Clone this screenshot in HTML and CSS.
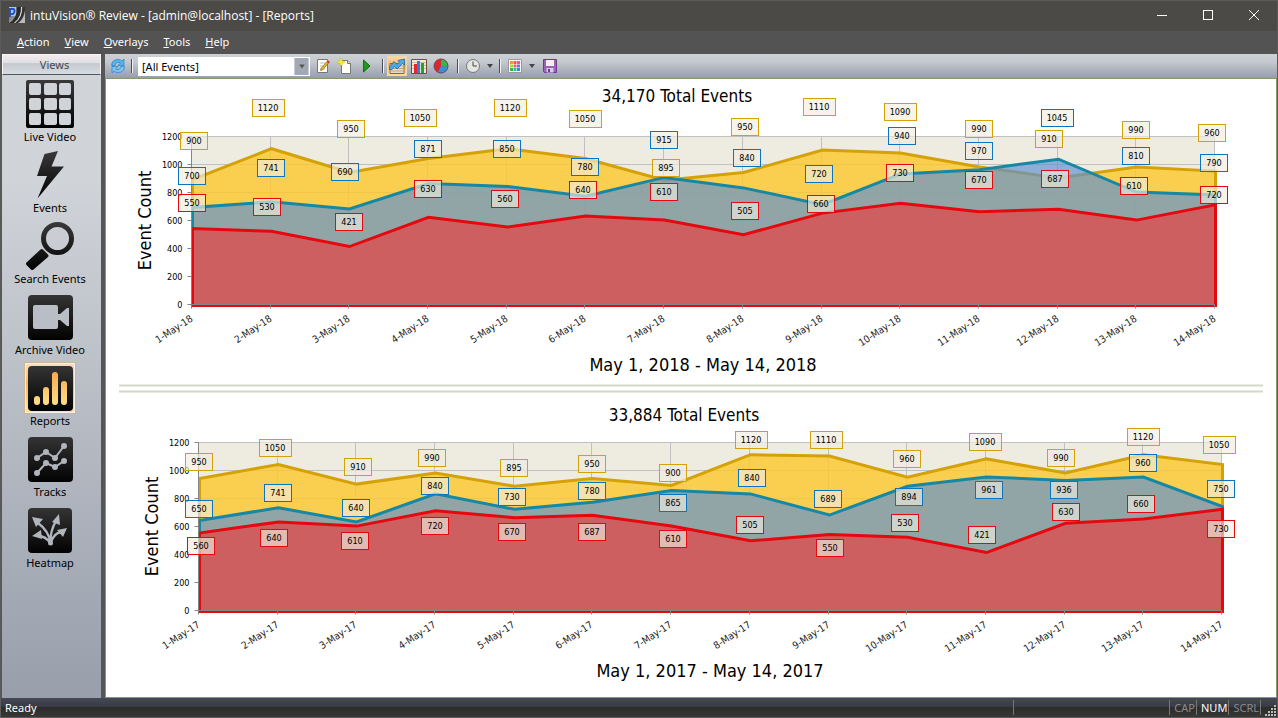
FILE: index.html
```html
<!DOCTYPE html>
<html lang="en">
<head>
<meta charset="utf-8">
<title>intuVision Review - Reports</title>
<link rel="stylesheet" href="styles.css">
</head>
<body>
<div class="app">
  <header class="titlebar">
    <svg class="logo" viewBox="0 0 16 16" aria-hidden="true">
      <defs><linearGradient id="logoBg" x1="0" y1="0" x2="1" y2="1"><stop offset="0" stop-color="#555"/><stop offset="1" stop-color="#d0d0d0"/></linearGradient></defs>
      <rect width="16" height="16" fill="url(#logoBg)"/>
      <rect width="7" height="9" fill="#b9c3d2"/>
      <path d="M1 1v9M1.500 2h2.500q1.500 0 1.500 2t-1.500 3H2" fill="none" stroke="#1e56c8" stroke-width="2"/>
      <path d="M12 0q1 10-7 16H0q8-4 8-16z" fill="#2b2b2b"/>
      <path d="M16 3q-1 9-7 13H6Q13 11 13.500 0H16z" fill="#333"/>
      <path d="M12.500 0Q13 10 5.500 16" fill="none" stroke="#ddd"/>
      <path d="M16 5q-1 8-6 11h6z" fill="#bbb"/>
    </svg>
    <h1 class="title">intuVision® Review - [admin@localhost] - [Reports]</h1>
    <div class="window-buttons">
      <button type="button" aria-label="Minimize"><svg viewBox="0 0 12 12"><path d="M1 6.500h10"/></svg></button>
      <button type="button" aria-label="Maximize"><svg viewBox="0 0 12 12"><rect x="1.500" y="1.500" width="9" height="9"/></svg></button>
      <button type="button" aria-label="Close"><svg viewBox="0 0 12 12"><path d="M1 1l10 10M11 1L1 11"/></svg></button>
    </div>
  </header>

  <nav class="menubar" aria-label="Main menu">
    <button type="button"><u>A</u>ction</button>
    <button type="button"><u>V</u>iew</button>
    <button type="button"><u>O</u>verlays</button>
    <button type="button"><u>T</u>ools</button>
    <button type="button"><u>H</u>elp</button>
  </nav>

  <div class="workspace">
    <aside class="sidebar">
      <h2 class="sidebar-title">Views</h2>
      <svg class="defs" aria-hidden="true">
        <defs>
          <linearGradient id="tile" x1="0" y1="0" x2="0" y2="1"><stop offset="0" stop-color="#343434"/><stop offset="1" stop-color="#020202"/></linearGradient>
          <linearGradient id="ink" gradientUnits="userSpaceOnUse" x1="0" y1="0" x2="0" y2="48"><stop offset="0" stop-color="#3a3a3a"/><stop offset="1" stop-color="#000"/></linearGradient>
          <linearGradient id="bars" gradientUnits="userSpaceOnUse" x1="0" y1="8" x2="0" y2="41"><stop offset="0" stop-color="#fba94a"/><stop offset="1" stop-color="#fde08a"/></linearGradient>
        </defs>
      </svg>
      <button type="button" class="view">
        <svg class="view-icon" viewBox="0 0 48 48"><path fill="url(#ink)" fill-rule="evenodd" d="M2 0h44q2 0 2 2v44q0 2-2 2H2q-2 0-2-2V2q0-2 2-2z
          M5 3q-2 0-2 2v8q0 2 2 2h8q2 0 2-2V5q0-2-2-2z M20 3q-2 0-2 2v8q0 2 2 2h9q2 0 2-2V5q0-2-2-2z M35 3q-2 0-2 2v8q0 2 2 2h8q2 0 2-2V5q0-2-2-2z
          M5 18q-2 0-2 2v8q0 2 2 2h8q2 0 2-2v-8q0-2-2-2z M20 18q-2 0-2 2v8q0 2 2 2h9q2 0 2-2v-8q0-2-2-2z M35 18q-2 0-2 2v8q0 2 2 2h8q2 0 2-2v-8q0-2-2-2z
          M5 33q-2 0-2 2v8q0 2 2 2h8q2 0 2-2v-8q0-2-2-2z M20 33q-2 0-2 2v8q0 2 2 2h9q2 0 2-2v-8q0-2-2-2z M35 33q-2 0-2 2v8q0 2 2 2h8q2 0 2-2v-8q0-2-2-2z"/></svg>
        <span>Live Video</span>
      </button>
      <button type="button" class="view">
        <svg class="view-icon" viewBox="0 0 48 48"><path fill="url(#ink)" d="M18.500 3L32 0 25.500 15.500H38L11.500 47.500 21 25H11z"/></svg>
        <span>Events</span>
      </button>
      <button type="button" class="view">
        <svg class="view-icon" viewBox="0 0 48 48"><circle cx="31.500" cy="16.500" r="14" fill="none" stroke="url(#ink)" stroke-width="5"/><path fill="url(#ink)" d="M14.500 27.500q1.500-1 2.500 0l5 5q1 1 0 2.500L7.500 47.500q-1.500 1-2.500 0l-4.500-4.500q-1-1.500 0-2.500z"/></svg>
        <span>Search Events</span>
      </button>
      <button type="button" class="view">
        <svg class="view-icon" viewBox="0 0 48 48"><rect x="2" y="2" width="45" height="45" rx="4" fill="url(#tile)"/><rect x="7" y="12" width="25" height="24" rx="2" fill="#b9bdc5"/><path fill="#b9bdc5" d="M32 21h2l7-6h2v18h-2l-7-6h-2z"/></svg>
        <span>Archive Video</span>
      </button>
      <button type="button" class="view is-active">
        <svg class="view-icon" viewBox="0 0 48 48"><rect x="2" y="2" width="45" height="45" rx="4" fill="url(#tile)"/><path fill="none" stroke="url(#bars)" stroke-width="6" stroke-linecap="round" d="M11 35v3.010M20 26v12M29 11v27M38 20v18"/></svg>
        <span>Reports</span>
      </button>
      <button type="button" class="view">
        <svg class="view-icon" viewBox="0 0 48 48"><rect x="2" y="2" width="45" height="45" rx="4" fill="url(#tile)"/><g fill="#b0b5be" stroke="#b0b5be" stroke-width="2"><path fill="none" d="M11 23l9-6 9 6 9-12M11 38l9-10 9 4 9-6"/><circle cx="11" cy="23" r="2"/><circle cx="20" cy="17" r="2"/><circle cx="29" cy="23" r="2"/><circle cx="38" cy="11" r="2"/><circle cx="11" cy="38" r="2"/><circle cx="20" cy="28" r="2"/><circle cx="29" cy="32" r="2"/><circle cx="38" cy="26" r="2"/></g></svg>
        <span>Tracks</span>
      </button>
      <button type="button" class="view">
        <svg class="view-icon" viewBox="0 0 48 48"><rect x="2" y="2" width="44" height="45" rx="4" fill="url(#tile)"/><g fill="#b0b5be"><path fill="none" stroke="#b0b5be" stroke-width="2.400" d="M24.500 37Q23 25 12 17M24.500 37Q19 30 13 30M24.500 37Q24 25 30 15M24.500 37Q28 27 35 26"/><path d="M6 11l11 2-7 8zM6 30l9-6 1 9zM33 8l1 11-8-3zM41 22l-4 9-6-7z"/><circle cx="24.500" cy="37" r="2.500"/></g></svg>
        <span>Heatmap</span>
      </button>
    </aside>

    <main class="content">
      <div class="toolbar">
        <button type="button" class="tool" aria-label="Refresh"><svg viewBox="0 0 16 16"><path d="M1.500 7.500Q2 1.500 8 1.500q2.500 0 4 1.500l2-2v6.500H8l2.500-2.500Q9 4 7.500 4.500 5.500 5 5 7.500z" fill="#58b4ee" stroke="#2f86cc" stroke-width=".8"/><path d="M14.500 8.500q-.5 6-6.500 6-2.500 0-4-1.500l-2 2V8.500h6L5.500 11q1.500 1 3 .5 2-.5 2.500-3z" fill="#7cc8f4" stroke="#2f86cc" stroke-width=".8"/></svg></button>
        <i class="sep"></i>
        <div class="combo">
          <select aria-label="Event filter"><option>[All Events]</option></select>
          <svg class="combo-arrow" viewBox="0 0 15 18" aria-hidden="true"><rect width="15" height="18" fill="#a3a9b4"/><path d="M5 7h6l-3 4z" fill="#555"/></svg>
        </div>
        <button type="button" class="tool" aria-label="Edit report"><svg viewBox="0 0 16 16"><path d="M2.500 1.500h10v13h-10z" fill="#fffef4" stroke="#777"/><path d="M5 5h5M5 8h4M5 11h5" stroke="#bbb"/><path d="M6 10.500l6-7 1.500 1.500-6 7-2 .5z" fill="#e9b52c" stroke="#7a5a10" stroke-width=".6"/><path d="M12 4l1.500-1.500L15 4l-1.500 1.500z" fill="#d33"/></svg></button>
        <button type="button" class="tool" aria-label="New report"><svg viewBox="0 0 16 16"><path d="M4.500 2.500h6l3 3v10h-9z" fill="#fdfdf6" stroke="#777"/><path d="M10.500 2.500v3h3" fill="#ddd" stroke="#777"/><path d="M4 .5v7M.5 4h7" stroke="#c9b21c" stroke-width="2.500"/><path d="M4 1v6M1 4h6" stroke="#fdf23c" stroke-width="1.500"/></svg></button>
        <button type="button" class="tool" aria-label="Run report"><svg viewBox="0 0 16 16"><path d="M4.500 2v12L11 8z" fill="#1f9a1a" stroke="#0c720a"/></svg></button>
        <i class="sep sep-wide"></i>
        <button type="button" class="tool is-on" aria-label="Area chart" aria-pressed="true"><svg viewBox="0 0 16 16"><path d="M1 5.500h14v10H1z" fill="#e8dcc8" stroke="#7e6648"/><path d="M2 8h12M2 10.500h12M2 13h12" stroke="#c3a37c"/><path d="M.5 9.500l4.500-6 3 3L10.500 4 9 2.500 15.500 1v6l-2-1.500L8 11 5.500 8.500 3 11.500H.5z" fill="#4fa9e8" stroke="#2069a8" stroke-width=".8"/></svg></button>
        <button type="button" class="tool" aria-label="Bar chart"><svg viewBox="0 0 16 16"><path d="M.5 1.500h15v14H.5z" fill="#f2ead9" stroke="#6e4f38"/><path d="M1 4.500h14M1 7.500h14M1 10.500h14" stroke="#cfb9a0"/><path d="M3 6h3v9H3z" fill="#e8242c"/><path d="M6 3h3v12H6z" fill="#2586d8"/><path d="M10 5h3v10h-3z" fill="#23a038"/></svg></button>
        <button type="button" class="tool" aria-label="Pie chart"><svg viewBox="0 0 16 16"><circle cx="8" cy="8" r="7" fill="#de2631"/><path d="M8 8V1a7 7 0 0 1 7 8z" fill="#38b54a"/><path d="M8 8l7 1a7 7 0 0 1-10 5.500z" fill="#3193dd"/><circle cx="8" cy="8" r="7" fill="none" stroke="#6b4b55"/></svg></button>
        <i class="sep"></i>
        <button type="button" class="tool tool-menu" aria-label="Time interval"><svg viewBox="0 0 16 16"><circle cx="8" cy="8" r="6.500" fill="#e4e6e2" stroke="#777"/><path d="M8 3.500V8h4" fill="none" stroke="#444"/></svg><svg class="caret" viewBox="0 0 6 4"><path d="M0 0h6L3 4z"/></svg></button>
        <i class="sep"></i>
        <button type="button" class="tool tool-menu" aria-label="Colors"><svg viewBox="0 0 16 16"><path d="M1.500 1.500h13v13h-13z" fill="#fff" stroke="#999"/><path d="M3 3h3v3H3z" fill="#f29a38"/><path d="M6.500 3h3v3h-3z" fill="#ef5a4c"/><path d="M10 3h3v3h-3z" fill="#e755a6"/><path d="M3 6.500h3v3H3z" fill="#b5cf38"/><path d="M6.500 6.500h3v3h-3z" fill="#f0577e"/><path d="M10 6.500h3v3h-3z" fill="#8f5fe0"/><path d="M3 10h3v3H3z" fill="#3fb54e"/><path d="M6.500 10h3v3h-3z" fill="#38b8a8"/><path d="M10 10h3v3h-3z" fill="#4b7de8"/></svg><svg class="caret" viewBox="0 0 6 4"><path d="M0 0h6L3 4z"/></svg></button>
        <button type="button" class="tool tool-save" aria-label="Save"><svg viewBox="0 0 16 16"><path d="M1.500 1.500h13v13h-12l-1-1z" fill="#9a62b8" stroke="#6b3a8c"/><path d="M4 2h8v6H4z" fill="#f3eef6"/><path d="M4.500 10h7v4.500h-7z" fill="#d9cbe2"/><path d="M6 11h2v3H6z" fill="#6b3a8c"/></svg></button>
      </div>
      <section class="reports">
        <svg class="chart" id="chart-2018" viewBox="0 0 1170 305" role="img" aria-label="Events, May 2018"></svg>
        <div class="divider" role="separator"></div>
        <svg class="chart" id="chart-2017" viewBox="0 0 1170 304" role="img" aria-label="Events, May 2017"></svg>
      </section>
    </main>
  </div>

  <footer class="statusbar">
    <span class="status-text">Ready</span>
    <span class="status-pane"></span>
    <span class="status-key">CAP</span>
    <span class="status-key is-set">NUM</span>
    <span class="status-key">SCRL</span>
    <svg class="grip" viewBox="0 0 12 12" aria-hidden="true"><path d="M9 0h2v2H9zM6 3h2v2H6zM9 3h2v2H9zM3 6h2v2H3zM6 6h2v2H6zM9 6h2v2H9zM0 9h2v2H0zM3 9h2v2H3zM6 9h2v2H6zM9 9h2v2H9z"/></svg>
  </footer>
</div>
<script src="charts.js"></script>
</body>
</html>
```

FILE: styles.css
```css
* { box-sizing: border-box; }

body {
  margin: 0;
  background: #555;
  font-family: "Noto Sans", "Open Sans", sans-serif;
  font-size: 11px;
  color: #000;
}

button {
  margin: 0;
  padding: 0;
  border: 0;
  background: none;
  font: inherit;
  color: inherit;
}

.app {
  display: flex;
  flex-direction: column;
  min-height: 100vh;
  border: 1px solid #5b5b5a;
  border-bottom: 0;
}

.titlebar {
  display: flex;
  align-items: center;
  height: 30px;
  padding: 0 0 2px 8px;
  background: #4b4a47;
  color: #fff;
}
.logo { width: 16px; height: 16px; }
.title {
  flex: 1;
  margin: 0 0 0 5px;
  font-family: "Open Sans", "Noto Sans", sans-serif;
  font-size: 12px;
  font-weight: 400;
}
.window-buttons { display: flex; }
.window-buttons button {
  display: grid;
  place-items: center;
  width: 46px;
  height: 28px;
}
.window-buttons svg {
  width: 12px;
  height: 12px;
  fill: none;
  stroke: #fff;
}

.menubar {
  display: flex;
  gap: 15px;
  align-items: center;
  height: 23px;
  padding: 0 0 2px 16px;
  background: #535353;
  color: #fff;
}

.workspace {
  display: flex;
  flex: 1;
  gap: 4px;
  padding-left: 1px;
  background: #565656;
}

.sidebar {
  flex: 0 0 99px;
  background: linear-gradient(#d0d3d8 20%, #989fab);
}
.sidebar-title {
  height: 21px;
  margin: 0 0 5px;
  border: 1px solid #f5f5f7;
  border-bottom-color: #4a5866;
  background: linear-gradient(#f4eaec 0, #dfe0e4 40%, #c6cad1 45%, #d8dbdf 100%);
  font-size: 11px;
  font-weight: 400;
  line-height: 20px;
  text-align: center;
  color: #46484f;
  padding-left: 6px;
}
.defs { display: block; width: 0; height: 0; }
.view {
  display: flex;
  flex-direction: column;
  align-items: center;
  width: 100%;
  height: 66px;
  margin-bottom: 5px;
  padding-right: 3px;
  line-height: 18px;
}
.view-icon { flex: none; width: 48px; height: 48px; }
.view.is-active .view-icon {
  background: linear-gradient(#fcdcb8 0, #fbb562 40%, #fde39a 100%);
  box-shadow: 0 0 0 1px #f7efe2, 0 0 0 2px #c9b896;
}

.content {
  display: flex;
  flex: 1;
  flex-direction: column;
  min-width: 0;
}
.toolbar {
  display: flex;
  align-items: center;
  height: 24px;
  padding-left: 5px;
  background: linear-gradient(#cdd1d3 0, #c6cad0 30%, #969eab 100%);
}
.tool {
  display: flex;
  align-items: center;
  justify-content: center;
  width: 22px;
  height: 20px;
}
.tool:first-child { width: 16px; }
.tool svg { width: 16px; height: 16px; }
.tool.is-on {
  width: 20px;
  margin-right: 1px;
  border: 1px solid #f4d7a2;
  background: linear-gradient(#fbd9ac, #fcb25c 45%, #fde18c);
}
.tool-menu { width: 30px; gap: 6px; }
.tool .caret { width: 6px; height: 4px; fill: #444; }
.tool-save { width: 20px; margin-left: 4px; }
.sep {
  width: 2px;
  height: 14px;
  margin: 0 5px;
  border-left: 1px solid #46505c;
  border-right: 1px solid #eef0f2;
}
.sep-wide { margin: 0 3px 0 4px; }
.combo {
  display: grid;
  width: 172px;
  height: 19px;
  margin-right: 2px;
  background: #fff;
}
.combo select,
.combo-arrow { grid-area: 1 / 1; }
.combo select {
  appearance: none;
  min-width: 0;
  margin: 0;
  padding: 0 3px;
  border: 1px solid #fff;
  border-radius: 0;
  background: #fff;
  font: inherit;
  color: #000;
}
.combo-arrow {
  justify-self: end;
  align-self: center;
  width: 15px;
  height: 17px;
  margin-right: 1px;
  pointer-events: none;
}

.reports {
  display: flex;
  flex: 1;
  flex-direction: column;
  border: 1px solid #87976a;
  background: #fff;
}
.chart {
  display: block;
  width: 100%;
  height: auto;
  font-family: "DejaVu Sans Condensed", "Noto Sans", sans-serif;
}
.divider {
  height: 9px;
  margin: 0 13px;
  background: linear-gradient(#e9ece2 1px, #d3d8c8 1px 2px, #e9ece2 2px 3px, #fff 3px 6px, #e9ece2 6px 7px, #d3d8c8 7px 8px, #e9ece2 8px);
}

.plot { fill: #eeebe0; }
.grid { fill: none; stroke: #c0c0c3; }
.axis { fill: none; stroke: #858585; }
.area { stroke-width: 3; }
.area-yellow { fill: rgba(252, 200, 44, .8); stroke: #d4a206; }
.area-blue { fill: rgba(92, 144, 211, .67); stroke: #1688a4; }
.area-red { fill: rgba(221, 77, 80, .8); stroke: #e6080f; }
.tag { fill: rgba(239, 236, 222, .65); }
.tag-yellow { stroke: #d4a206; }
.tag-blue { stroke: #0a74c0; }
.tag-red { stroke: #e6080f; }
.value { font-size: 9px; text-anchor: middle; }
.tick { font-size: 9px; text-anchor: end; }
.date { font-size: 10px; text-anchor: end; fill: #222; }
.chart-title { font-size: 17px; text-anchor: middle; }
.axis-title { font-size: 18px; text-anchor: middle; }

.statusbar {
  display: flex;
  align-items: center;
  height: 20px;
  padding-left: 4px;
  border-bottom: 1px solid #5b5b5a;
  background: linear-gradient(#454956 0, #383b45 45%, #2b2b2a 45%, #383836 100%);
  color: #8b8b8b;
}
.status-text { flex: 1; color: #fff; }
.status-pane { width: 156px; height: 15px; border-left: 1px solid #777; }
.status-key {
  height: 15px;
  padding: 0 1px 0 4px;
  border-left: 1px solid #777;
  line-height: 15px;
}
.status-key:last-of-type { border-right: 1px solid #777; }
.status-key.is-set { color: #fff; }
.grip { width: 12px; height: 12px; margin-left: 4px; align-self: flex-end; fill: #bbb; }
```

FILE: charts.js
```js
const NS = "http://www.w3.org/2000/svg";

// Each series point is [value, label centre x, label centre y].
const reports = [
  {
    id: "chart-2018", left: 85.5, top: 57.5, year: "18",
    title: "34,170 Total Events", titleX: 571, titleY: 23,
    range: "May 1, 2018 - May 14, 2018", rangeX: 597, rangeY: 292,
    series: {
      yellow: [[900,88,62],[1120,162,29],[950,245,50],[1050,314,39],[1120,404,29],[1050,479,40],[895,560,89],[950,639,48],[1110,713,28],[1090,794,33],[990,873,50],[910,943,60],[990,1030,51],[960,1106,54]],
      blue: [[700,86,97],[741,165,89],[690,239,93],[871,322,70],[850,401,70],[780,479,88],[915,558,61],[840,641,79],[720,713,95],[940,796,57],[970,873,72],[1045,951,39],[810,1030,77],[790,1108,84]],
      red: [[550,86,124],[530,161,128],[421,243,143],[630,322,110],[560,399,120],[640,477,111],[610,558,113],[505,639,132],[660,715,125],[730,794,94],[670,873,101],[687,949,100],[610,1028,107],[720,1108,116]]
    }
  },
  {
    id: "chart-2017", left: 92.5, top: 49.5, year: "17",
    title: "33,884 Total Events", titleX: 578, titleY: 28,
    range: "May 1, 2017 - May 14, 2017", rangeX: 604, rangeY: 284,
    series: {
      yellow: [[950,93,69],[1050,169,55],[910,252,74],[990,326,65],[895,408,75],[950,486,71],[900,567,80],[1120,645,47],[1110,720,47],[960,801,66],[1090,879,49],[990,955,65],[1120,1037,44],[1050,1113,52]],
      blue: [[650,93,116],[741,172,100],[640,250,115],[840,329,93],[730,406,104],[780,486,98],[865,567,110],[840,646,85],[689,722,106],[894,803,104],[961,883,97],[936,958,97],[960,1037,70],[750,1115,96]],
      red: [[560,95,153],[640,168,145],[610,249,148],[720,329,133],[670,406,139],[687,486,139],[610,567,146],[505,644,132],[550,724,155],[530,799,130],[421,876,142],[630,960,119],[660,1035,111],[730,1115,136]]
    }
  }
];

const PLOT_W = 1023;
const PLOT_H = 168;
const MAX = 1200;

function add(parent, tag, attrs, text) {
  const node = document.createElementNS(NS, tag);
  for (const key in attrs) node.setAttribute(key, attrs[key]);
  if (text !== undefined) node.textContent = text;
  parent.appendChild(node);
}

function draw(report) {
  const svg = document.getElementById(report.id);
  const { left, top } = report;
  const bottom = top + PLOT_H;
  const px = i => left + Math.round(i * PLOT_W / 13);
  const py = v => bottom - v * PLOT_H / MAX;

  add(svg, "rect", { class: "plot", x: left, y: top, width: PLOT_W, height: PLOT_H });

  let grid = "";
  for (let v = 200; v <= MAX; v += 200) grid += `M${left} ${py(v)}h${PLOT_W}`;
  for (let i = 1; i < 14; i++) grid += `M${px(i)} ${top}v${PLOT_H}`;
  add(svg, "path", { class: "grid", d: grid });

  let axis = `M${left} ${top}V${bottom}h${PLOT_W}`;
  for (let v = 0; v <= MAX; v += 200) {
    axis += `M${left - 4} ${py(v)}h4`;
    add(svg, "text", { class: "tick", x: left - 9, y: py(v) + 3 }, v);
  }
  for (let i = 0; i < 14; i++) axis += `M${px(i)} ${bottom}v4`;

  for (const color in report.series) {
    const line = report.series[color].map((p, i) => `${px(i) + 1},${py(p[0]) + 1}`);
    const points = [`${left + 1},${bottom + 1}`, ...line, `${left + PLOT_W + 1},${bottom + 1}`];
    add(svg, "polygon", { class: `area area-${color}`, points: points.join(" ") });
  }
  add(svg, "path", { class: "axis", d: axis });

  for (const color in report.series) {
    for (const [value, cx, cy] of report.series[color]) {
      const w = value > 999 ? 32 : 27;
      add(svg, "rect", { class: `tag tag-${color}`, x: Math.floor(cx - w / 2) + 0.5, y: cy - 8.5, width: w, height: 17 });
      add(svg, "text", { class: "value", x: cx, y: cy + 3 }, value);
    }
  }

  for (let i = 0; i < 14; i++) {
    const x = px(i) + 2;
    const y = bottom + 16;
    add(svg, "text", { class: "date", x, y, transform: `rotate(-33 ${x} ${y})` }, `${i + 1}-May-${report.year}`);
  }

  const ax = left - 41;
  const ay = top + PLOT_H / 2;
  add(svg, "text", { class: "axis-title", x: ax, y: ay, transform: `rotate(-90 ${ax} ${ay})` }, "Event Count");
  add(svg, "text", { class: "chart-title", x: report.titleX, y: report.titleY }, report.title);
  add(svg, "text", { class: "axis-title", x: report.rangeX, y: report.rangeY }, report.range);
}

reports.forEach(draw);
```
